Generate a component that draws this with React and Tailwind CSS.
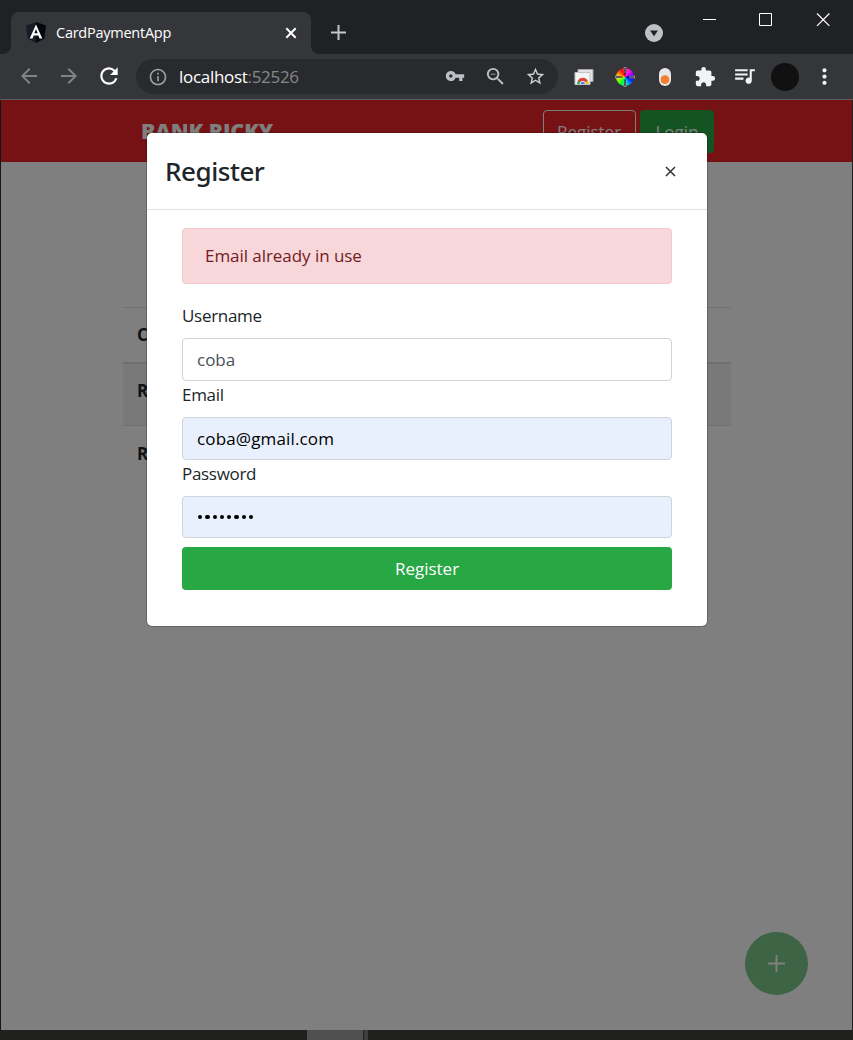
import {
  MdArrowBack,
  MdArrowForward,
  MdRefresh,
  MdInfoOutline,
  MdVpnKey,
  MdZoomOut,
  MdStarBorder,
  MdExtension,
  MdQueueMusic,
  MdMoreVert,
} from "react-icons/md";

function AngularLogo() {
  return (
    <svg width="20" height="21" viewBox="0 0 20 21" className="mt-[-1px]">
      <path d="M10 0 0 3.5 1.6 16.4 10 21z" fill="#161b26" />
      <path d="M10 0 20 3.5 18.4 16.4 10 21z" fill="#04070f" />
      <path d="M10 2.4 3.7 16.4h2.8l1.2-3h4.6l1.2 3h2.8zm0 4.6 1.7 4.3H8.3z" fill="#fff" />
    </svg>
  );
}

function TabStrip() {
  return (
    <div className="flex h-[54px] shrink-0 items-start bg-[#202124] pl-[3px]">
      <svg className="mt-[46px]" width="8" height="8" viewBox="0 0 8 8">
        <path d="M8 0v8H0a8 8 0 0 0 8-8z" fill="#35363a" />
      </svg>
      <div className="mt-[12px] flex h-[42px] w-[300px] items-center rounded-t-[8px] bg-[#35363a] pl-[15px]">
        <AngularLogo />
        <span className="ml-[10px] w-[226px] font-['Open_Sans',sans-serif] text-[14.5px] tracking-[-0.25px] whitespace-nowrap text-white">
          CardPaymentApp
        </span>
        <svg width="18" height="18" viewBox="0 0 18 18" stroke="#fff" strokeWidth="2" className="mt-[-1px]">
          <path d="M4.3 4.3l9.4 9.4M13.7 4.3l-9.4 9.4" />
        </svg>
      </div>
      <svg className="mt-[46px]" width="8" height="8" viewBox="0 0 8 8">
        <path d="M0 0v8h8a8 8 0 0 1-8-8z" fill="#35363a" />
      </svg>
      <svg className="mt-[24px] ml-[11px]" width="17" height="17" viewBox="0 0 17 17" stroke="#c4c7c9" strokeWidth="2">
        <path d="M8.5 1v15M1 8.5h15" />
      </svg>
      <svg className="mt-[24px] ml-[298px]" width="18" height="18" viewBox="0 0 18 18">
        <circle cx="9" cy="9" r="9" fill="#bdc1c6" />
        <path d="M5 6.4h8L9 12.2z" fill="#202124" />
      </svg>
      <svg className="mt-[12px] ml-[39px]" width="14" height="15" viewBox="0 0 14 15">
        <path d="M1 7.5h13" stroke="#fff" />
      </svg>
      <svg className="mt-[12px] ml-[43px]" width="14" height="15" viewBox="0 0 14 15">
        <path d="M.5 1.5h12v12H.5z" fill="none" stroke="#fff" />
      </svg>
      <svg className="mt-[12px] ml-[43px]" width="14" height="15" viewBox="0 0 14 15">
        <path d="M1 1.5l12.4 12.4M13.4 1.5l-12.4 12.4" stroke="#fff" strokeWidth="1.2" />
      </svg>
    </div>
  );
}

function IconBox({ children }) {
  return <span className="flex w-[40px] shrink-0 items-center justify-center">{children}</span>;
}

function GalleryIcon() {
  return (
    <svg width="20" height="18" viewBox="0 0 20 18">
      <path d="M4 1.5h15v12H4z" fill="#e4e4e4" stroke="#a5a5a5" />
      <path d="M1 4.5h15v12H1z" fill="#f5f5f5" stroke="#c4c4c4" />
      <path d="M3 16a5.7 5.7 0 0 1 11.4 0z" fill="#34a853" />
      <path d="M3.8 12.8a5.7 5.7 0 0 1 10 0L8.7 16z" fill="#db4437" />
      <path d="M8.7 16l5.1-3.2a5.7 5.7 0 0 1 .6 3.2z" fill="#fbbc05" />
      <path d="M5.7 16a3 3 0 0 1 6 0z" fill="#fff" />
      <path d="M6.4 16a2.3 2.3 0 0 1 4.6 0z" fill="#4285f4" />
    </svg>
  );
}

function ColorWheel() {
  return (
    <span className="ml-[1px] flex size-[18px] items-center justify-center rounded-full bg-[conic-gradient(#ff0060,#ff20e0,#c000ff,#2000ff,#0030ff,#00a0ff,#00ffa0,#00ff30,#80ff00,#fff000,#ff8000,#ff1000,#ff0060)]">
      <svg width="20" height="20" viewBox="-10 -10 20 20" className="shrink-0">
        <path d="M0-10v6M0 10V4M-10 0h6M10 0H4" stroke="#aaa" strokeWidth="2.4" />
        <path d="M0-9.3v7M0 9.3V2.3M-9.3 0h7M9.3 0H2.3" stroke="#111" strokeWidth="1.1" />
      </svg>
    </span>
  );
}

function Toolbar() {
  return (
    <div className="flex h-[45px] shrink-0 items-center bg-[#35363a] pl-[8px]">
      <div className="flex w-[128px] items-center">
        <IconBox><MdArrowBack size={24} color="#828386" className="mt-[-1px] ml-[1px]" /></IconBox>
        <IconBox><MdArrowForward size={24} color="#828386" className="mt-[-1px] ml-[1px]" /></IconBox>
        <IconBox><MdRefresh size={26} color="#fff" className="mt-[-1px] ml-[1px]" /></IconBox>
      </div>
      <div className="flex h-[35px] w-[422px] shrink-0 items-center rounded-full bg-[#292a2d] pl-[12px]">
        <MdInfoOutline size={20} color="#9aa0a6" />
        <span className="ml-[11px] flex-1 font-['Open_Sans',sans-serif] text-[17px] tracking-[-0.3px] text-white">
          localhost<span className="text-[#85888c]">:52526</span>
        </span>
        <IconBox><MdVpnKey size={20} color="#bdc1c6" className="mt-[-2px]" /></IconBox>
        <IconBox><MdZoomOut size={23} color="#bdc1c6" /></IconBox>
        <IconBox><MdStarBorder size={21} color="#d0d3d6" /></IconBox>
        <span className="w-[3px]" />
      </div>
      <div className="ml-[6px] flex items-center">
        <IconBox><GalleryIcon /></IconBox>
        <IconBox><ColorWheel /></IconBox>
        <IconBox>
          <svg width="12" height="18" viewBox="0 0 12 18" className="ml-[1px]">
            <rect width="12" height="18" rx="6" fill="#e8e8e8" />
            <circle cx="6" cy="11.7" r="4.4" fill="#f4802f" />
          </svg>
        </IconBox>
        <IconBox><MdExtension size={22} color="#f1f3f4" className="ml-[1px]" /></IconBox>
        <IconBox><MdQueueMusic size={25} color="#f1f3f4" className="mt-[-2px]" /></IconBox>
        <IconBox><span className="ml-[1px] size-[28px] rounded-full bg-[#111]" /></IconBox>
        <IconBox><MdMoreVert size={25} color="#f1f3f4" className="mt-[-1px] ml-[1px]" /></IconBox>
      </div>
    </div>
  );
}

function BankPage() {
  return (
    <div className="flex h-full flex-col bg-white font-['Open_Sans',sans-serif]">
      <header className="flex h-[62px] shrink-0 items-start bg-[#ee2428] pt-[10px] pl-[140px]">
        <span className="mt-[4px] w-[402px] pr-[1px] text-[21.5px] leading-[34px] font-extrabold tracking-[-0.15px] text-white">
          BANK RICKY
        </span>
        <button className="h-[43px] w-[93px] rounded-[4px] border border-white pr-[1px] text-[17px] text-white">
          Register
        </button>
        <button className="ml-[4px] h-[43px] w-[74px] rounded-[4px] bg-[#28a745] text-[17px] text-white">
          Login
        </button>
      </header>
      <div className="mt-[145px] ml-[122px] w-[608px] text-[17px] font-bold text-[#212529]">
        <div className="h-[55px] border-t border-[#e0e0e0] pt-[14px] pl-[14px] leading-[26px]">C</div>
        <div className="h-[63px] border-t-2 border-[#dedede] bg-[#f2f2f2] pt-[14px] pl-[14px] leading-[26px]">R</div>
        <div className="h-[64px] border-t border-[#e0e0e0] pt-[15px] pl-[14px] leading-[26px]">R</div>
      </div>
      <div className="mt-auto mr-[44px] mb-[35px] flex size-[63px] items-center justify-center self-end rounded-full bg-[#78c88a]">
        <svg width="17" height="17" viewBox="0 0 17 17" stroke="#fff" strokeWidth="2">
          <path d="M8.5 0v17M0 8.5h17" />
        </svg>
      </div>
    </div>
  );
}

function Field({ label, children, inputClass }) {
  return (
    <label className="block">
      <span className="block h-[36px] text-[17px] leading-[27px] tracking-[-0.3px] text-[#212529]">{label}</span>
      <span className={"flex items-center rounded-[4px] border border-[#ced4da] px-[14px] text-[17px] " + inputClass}>
        {children}
      </span>
    </label>
  );
}

function RegisterModal() {
  return (
    <div className="h-[493px] w-[560px] rounded-[5px] bg-white font-['Open_Sans',sans-serif] shadow-[0_0_0_1px_rgba(0,0,0,0.2)]">
      <div className="flex h-[77px] items-center justify-between border-b border-[#dee2e6] pr-[31px] pl-[18px]">
        <h5 className="mt-[1px] font-['Noto_Sans','Open_Sans',sans-serif] text-[26px] font-medium tracking-[-0.45px] text-[#212529]">
          Register
        </h5>
        <svg width="11" height="11" viewBox="0 0 11 11" stroke="#333" strokeWidth="1.5">
          <path d="M1 1l9 9M10 1l-9 9" />
        </svg>
      </div>
      <div className="px-[35px] pt-[18px]">
        <div className="mb-[18px] flex h-[56px] items-center rounded-[4px] border border-[#f5c6cb] bg-[#f8d7da] pl-[22px] text-[17px] tracking-[-0.05px] text-[#721c24]">
          Email already in use
        </div>
        <Field label="Username" inputClass="h-[43px] text-[#495057]">coba</Field>
        <Field label="Email" inputClass="h-[43px] bg-[#e8f0fe] tracking-[0.15px] text-black">coba@gmail.com</Field>
        <Field label="Password" inputClass="h-[42px] bg-[#e8f0fe] text-black">
          <span className="flex gap-[3px] pl-[1px]">
            {Array.from({ length: 8 }, (_, i) => (
              <span key={i} className="size-[4.3px] rounded-full bg-black" />
            ))}
          </span>
        </Field>
        <button className="mt-[9px] block h-[43px] w-full rounded-[4px] bg-[#28a745] text-[17px] text-white">
          Register
        </button>
      </div>
    </div>
  );
}

export default function App() {
  return (
    <div className="flex h-[1040px] w-[853px] flex-col overflow-hidden bg-[#202124]">
      <TabStrip />
      <Toolbar />
      <div className="h-px shrink-0 bg-[#5f6064]" />
      <div className="relative h-[930px] shrink-0 border-r border-l border-r-[#202020] border-l-[#161616]">
        <BankPage />
        <div className="absolute inset-0 flex items-start bg-black/50 pt-[33px] pl-[146px]">
          <RegisterModal />
        </div>
      </div>
      <div className="flex h-[10px] shrink-0 bg-[#20201f] pl-[307px]">
        <div className="w-[56px] bg-[#505050]" />
        <div className="ml-[1px] w-[4px] bg-[#3f3f3f]" />
      </div>
    </div>
  );
}
